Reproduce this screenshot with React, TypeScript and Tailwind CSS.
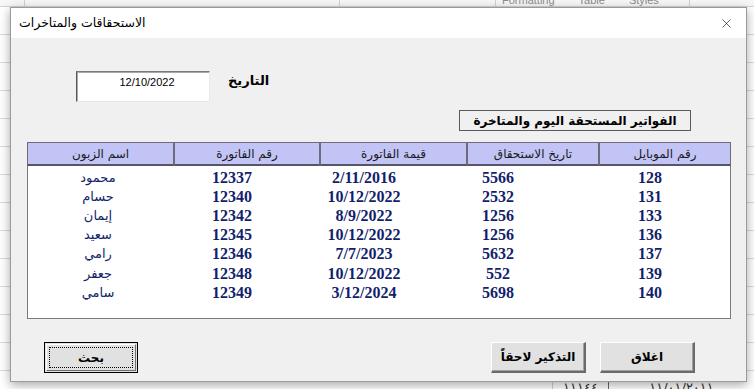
import { X } from "lucide-react";

const rows = [
  { name: "محمود", invoice: "12337", value: "2/11/2016", due: "5566", mobile: "128" },
  { name: "حسام", invoice: "12340", value: "10/12/2022", due: "2532", mobile: "131" },
  { name: "إيمان", invoice: "12342", value: "8/9/2022", due: "1256", mobile: "133" },
  { name: "سعيد", invoice: "12345", value: "10/12/2022", due: "1256", mobile: "136" },
  { name: "رامي", invoice: "12346", value: "7/7/2023", due: "5632", mobile: "137" },
  { name: "جعفر", invoice: "12348", value: "10/12/2022", due: "552", mobile: "139" },
  { name: "سامي", invoice: "12349", value: "3/12/2024", due: "5698", mobile: "140" },
];

// header order left -> right, as it shows on screen
const headers = ["اسم الزبون", "رقم الفاتورة", "قيمة الفاتورة", "تاريخ الاستحقاق", "رقم الموبايل"];

function Sheet() {
  // excel sheet peeking behind the dialog
  return (
    <div className="flex h-full flex-col bg-white">
      <div className="flex h-[7px] overflow-hidden border-b border-[#d4d4d4] bg-[#f7f7f7] text-[11px] text-[#8a8a8a] font-['Liberation_Sans',sans-serif]">
        <div className="w-[25px] border-r border-[#d0d0d0]" />
        <div className="w-[315px] border-r border-[#d0d0d0]" />
        <div className="w-[156px] border-r border-[#d0d0d0]" />
        <div className="-mt-[8px] flex w-[194px] gap-[24px] border-r border-[#d0d0d0] pl-[6px]">
          <span>Formatting</span>
          <span>Table</span>
          <span>Styles</span>
        </div>
      </div>
      <div className="flex-1 bg-[repeating-linear-gradient(to_bottom,#ffffff_0px,#ffffff_27px,#d8d8d8_27px,#d8d8d8_28px)]" />
      <div className="flex h-[8px] overflow-hidden text-[13px] text-[#333] font-['DejaVu_Sans',sans-serif]">
        <div className="w-[553px] border-r border-[#cfcfcf]" />
        <div className="-mt-[3px] w-[56px] border-r border-[#666] text-center">١١١٤٤</div>
        <div className="-mt-[3px] flex-1 text-center">١١/٠١/٢٠١١</div>
      </div>
    </div>
  );
}

function Button({ label, isDefault }: { label: string; isDefault?: boolean }) {
  if (isDefault) {
    return (
      <button className="h-[31px] w-[94px] border border-black bg-[#e1e1e1] p-[1px]">
        <div className="h-full w-full border-r border-b border-[#707070] border-t border-l border-t-white border-l-white p-[2px]">
          <div className="flex h-full w-full items-center justify-center border border-dotted border-black text-[12px] font-bold">
            {label}
          </div>
        </div>
      </button>
    );
  }
  return (
    <button className="flex h-[31px] w-[95px] items-center justify-center border-t border-l border-t-white border-l-white border-r-2 border-b-2 border-r-[#6a6a6a] border-b-[#6a6a6a] bg-[#e1e1e1] text-[12px] font-bold shadow-[inset_-1px_-1px_0_#a0a0a0]">
      {label}
    </button>
  );
}

export default function App() {
  return (
    <div className="relative h-[389px] w-[754px] overflow-hidden font-['DejaVu_Sans',sans-serif] text-black">
      <Sheet />

      <div className="absolute left-[10px] top-[7px] flex h-[375px] w-[737px] flex-col border border-[#9a9a9a] bg-[#f0f0f0] shadow-[0_3px_10px_rgba(0,0,0,0.35)]">
        <div className="flex h-[30px] items-center justify-between bg-white pl-[8px] pr-[12px]">
          <span className="text-[12.5px]">الاستحقاقات والمتاخرات</span>
          <X size={15} strokeWidth={1} />
        </div>

        <div className="flex flex-1 flex-col px-[16px]">
          <div className="mt-[33px] flex items-start pl-[49px]">
            <div className="h-[31px] w-[134px] border-t border-l border-t-[#7a7a7a] border-l-[#5a5a5a] border-r border-b border-r-[#e8e8e8] border-b-[#e8e8e8] bg-white pl-[8px] pt-[3px] text-center text-[11px] leading-[14px] font-['Liberation_Sans',sans-serif] shadow-[inset_1px_1px_0_#a8a8a8]">
              12/10/2022
            </div>
            <div className="ml-[18px] text-[13px] font-bold">التاريخ</div>
          </div>

          <div className="ml-[432px] mt-[8px] flex h-[21px] w-[232px] items-center justify-center border border-[#5a5a5a] text-[12px] font-bold">
            الفواتير المستحقة اليوم والمتاخرة
          </div>

          <div className="mt-[11px] grid h-[24px] w-[704px] grid-cols-[147px_146px_147px_132px_132px]">
            {headers.map((h) => (
              <div
                key={h}
                className="flex items-center justify-center border border-[#6c6c7c] border-b-2 border-b-[#55556a] bg-[#c2c4f6] text-[12px] text-[#1a1a1a]"
              >
                {h}
              </div>
            ))}
          </div>

          <div className="h-[153px] w-[704px] overflow-hidden border border-[#7a7a7a] border-t-0 bg-white pt-[2px] text-[#131f6c]">
            {rows.map((r) => (
              <div key={r.invoice} className="grid h-[19.1px] grid-cols-[140px_128px_136px_132px_172px] items-center text-center text-[16px] font-bold leading-[19px] font-['Liberation_Serif',serif]">
                <span className="text-[13px] font-normal font-['DejaVu_Sans',sans-serif]">{r.name}</span>
                <span>{r.invoice}</span>
                <span>{r.value}</span>
                <span>{r.due}</span>
                <span>{r.mobile}</span>
              </div>
            ))}
          </div>

          <div className="mt-[23px] flex items-start">
            <div className="ml-[17px]">
              <Button label="بحث" isDefault />
            </div>
            <div className="ml-auto mr-[35px] flex gap-[14px]">
              <Button label="التذكير لاحقاً" />
              <Button label="اغلاق" />
            </div>
          </div>
        </div>
      </div>
    </div>
  );
}
